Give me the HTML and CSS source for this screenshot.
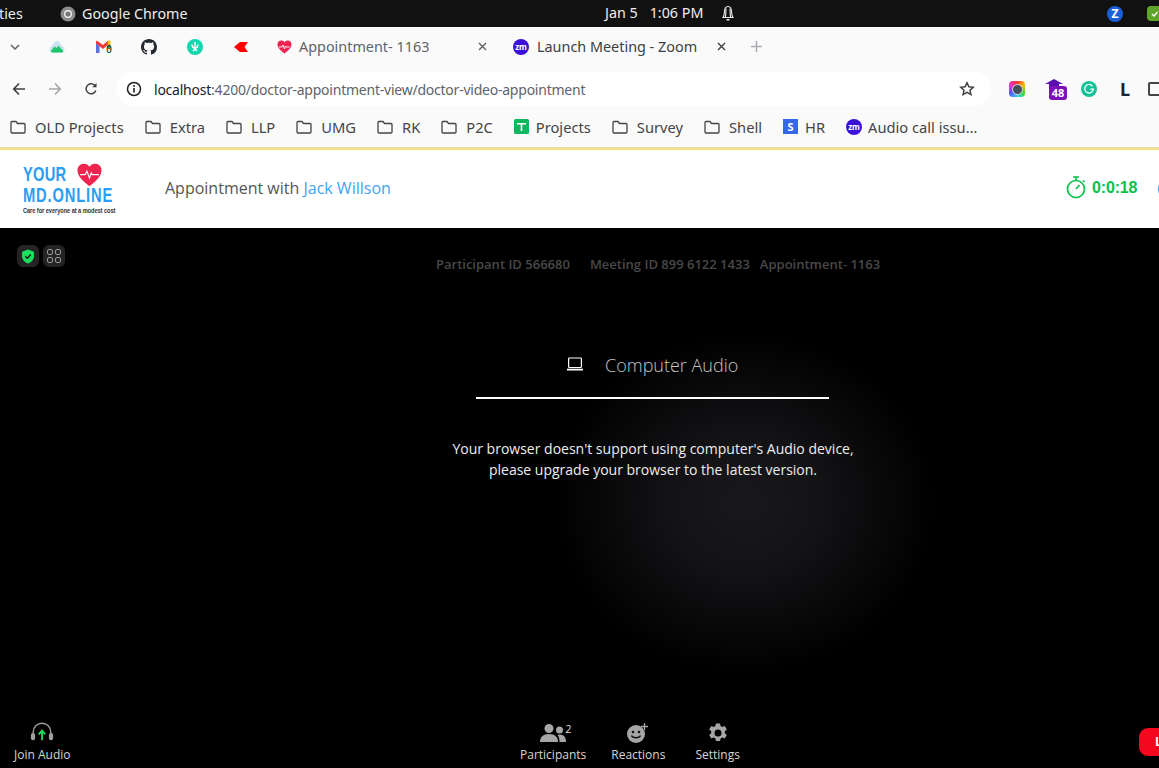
FILE: index.html
```html
<!DOCTYPE html>
<html lang="en">
<head>
<meta charset="utf-8">
<title>Appointment- 1163</title>
<link rel="stylesheet" href="styles.css">
</head>
<body>
<div class="screen">
  <header class="osbar">
    <div class="os-left">
      <span class="os-act">ties</span>
      <svg class="os-chrome" width="16" height="16" viewBox="0 0 16 16"><circle cx="8" cy="8" r="7.5" fill="#8a8a8a"/><circle cx="8" cy="8" r="4" fill="#eee"/><circle cx="8" cy="8" r="2.6" fill="#777"/></svg>
      <span class="os-app">Google Chrome</span>
    </div>
    <div class="os-clock">
      <span class="os-date">Jan 5</span><span>1:06 PM</span>
      <svg class="os-bell" width="14" height="16" viewBox="0 0 14 16" fill="none" stroke="#eee" stroke-width="1.1"><path d="M2 12.5c1.2-1.4 1.3-3 1.4-5.5C3.500 3.500 5 1.500 7 1.500S10.500 3.500 10.600 7c.1 2.500.2 4.100 1.400 5.500z"/><path d="M5 3.500C4.800 6 4.900 9 4.400 12M9 3.500c.2 2.500.1 5.500.6 8.500"/><path d="M5.500 14.800h3" stroke-width="1.500"/></svg>
    </div>
    <div class="os-right">
      <span class="os-z">Z</span>
      <span class="os-shield"><svg width="12" height="12" viewBox="0 0 12 12" fill="none" stroke="#fff" stroke-width="1.300"><path d="M3 6l2 2 3.500-4"/></svg></span>
    </div>
  </header>

  <div class="tabstrip">
    <div class="pin pin-chevron"><svg width="10" height="6" viewBox="0 0 10 6" fill="none" stroke="#5f6368" stroke-width="1.500"><path d="M1 1l4 4 4-4"/></svg></div>
    <div class="pin"><svg width="16" height="14" viewBox="0 0 16 14"><path d="M8 1c2 0 3.200 1.500 4.200 4 2 1.200 3.300 3 3.300 4.800 0 2-1.500 3.200-3.500 3.200H4c-2 0-3.500-1.200-3.500-3.200C.5 8 1.800 6.200 3.800 5 4.800 2.500 6 1 8 1z" fill="#c8e4f0"/><path d="M1.800 11 5.500 6.500l2 1.500L9.500 5.800l4.700 5.200c-.4 1-1.200 1.500-2.200 1.500H4c-1 0-1.800-.5-2.200-1.500z" fill="#1fc76a"/></svg></div>
    <div class="pin"><svg width="16" height="16" viewBox="0 0 16 16"><path d="M1 3.500V14h3.500V7.500z" fill="#5a6fe0"/><path d="M1 2.500c0-.6 1-1 1.500-.6L8 6l4.500-4 1-.3v3.500L8 10 1 4.500z" fill="#ea3a3a"/><path d="M12.500 2l2-.5c.6 0 1 .4 1 1V5.500L13 7z" fill="#fbbc04"/><path d="M12 7l3.500-1.500V9H12z" fill="#34a853"/><rect x="9.500" y="9" width="6.500" height="7" fill="#fff"/></svg><span class="gmail-count">0</span></div>
    <div class="pin"><svg width="16" height="16" viewBox="0 0 16 16" fill="#24292f"><path d="M8 0C3.580 0 0 3.580 0 8c0 3.540 2.290 6.530 5.470 7.590.4.070.55-.17.55-.38 0-.19-.01-.82-.01-1.490-2.010.37-2.530-.49-2.690-.94-.09-.23-.48-.94-.82-1.130-.28-.15-.68-.52-.01-.53.63-.01 1.080.58 1.230.82.720 1.210 1.870.87 2.330.66.070-.52.280-.87.510-1.070-1.780-.2-3.640-.89-3.640-3.950 0-.87.310-1.590.820-2.150-.08-.2-.36-1.020.08-2.120 0 0 .67-.21 2.200.82.640-.18 1.320-.27 2-.27s1.360.09 2 .27c1.530-1.040 2.200-.82 2.200-.82.440 1.100.16 1.920.08 2.120.51.560.82 1.270.82 2.150 0 3.070-1.870 3.750-3.650 3.950.29.250.54.730.54 1.480 0 1.070-.01 1.930-.01 2.200 0 .21.150.46.550.38A8.013 8.013 0 0 0 16 8c0-4.420-3.580-8-8-8z"/></svg></div>
    <div class="pin"><svg width="16" height="16" viewBox="0 0 16 16"><circle cx="8" cy="8" r="8" fill="#12d6ae"/><path d="M8 3v6M5 5.500c0 2 1 3.500 3 3.500s3-1.500 3-3.500M6 12l2-2 2 2" fill="none" stroke="#fff" stroke-width="1.400"/></svg></div>
    <div class="pin"><svg width="14" height="10" viewBox="0 0 14 10"><path d="M0 5 6 0h8l-3.500 5L14 10H6z" fill="#f00"/></svg></div>
    <div class="tab tab-one">
      <svg class="heart-fav" width="15" height="14" viewBox="0 0 30 28"><path d="M15 27C6 20 1 15 1 8.500 1 4 4.500 1 8.500 1c2.800 0 5 1.300 6.500 3.500C16.500 2.300 18.700 1 21.500 1 25.500 1 29 4 29 8.500 29 15 24 20 15 27z" fill="#f0244f"/><path d="M4 14h6l2-4 3 8 2-6 1 2h7" fill="none" stroke="#fff" stroke-width="1.800"/></svg>
      <span class="tab-title muted">Appointment- 1163</span>
      <svg class="tab-x" width="9" height="9" viewBox="0 0 9 9" stroke="#5f6368" stroke-width="1.400"><path d="M1 1l7 7M8 1l-7 7"/></svg>
    </div>
    <div class="tab tab-two">
      <span class="zm-badge">zm</span>
      <span class="tab-title">Launch Meeting - Zoom</span>
      <svg class="tab-x" width="9" height="9" viewBox="0 0 9 9" stroke="#3c4043" stroke-width="1.400"><path d="M1 1l7 7M8 1l-7 7"/></svg>
    </div>
    <svg class="tab-plus" width="11" height="11" viewBox="0 0 11 11" stroke="#a8abb0" stroke-width="1.500"><path d="M5.500 0v11M0 5.500h11"/></svg>
  </div>

  <div class="toolbar">
    <div class="nav-icons">
      <svg width="14" height="14" viewBox="0 0 14 14" fill="none" stroke="#3c4043" stroke-width="1.600"><path d="M13 7H2M7 1.500 1.700 7 7 12.500"/></svg>
      <svg width="14" height="14" viewBox="0 0 14 14" fill="none" stroke="#a4a7ab" stroke-width="1.600"><path d="M1 7h11M7 1.500 12.300 7 7 12.500"/></svg>
      <svg width="14" height="14" viewBox="0 0 14 14" fill="none" stroke="#3c4043" stroke-width="1.500"><path d="M11.800 8.500A5 5 0 1 1 10.600 3.200L12 4.600"/><path d="M12.500 1v4.200H8.300" fill="#3c4043" stroke="none"/></svg>
    </div>
    <div class="omnibox">
      <svg class="info-icon" width="16" height="16" viewBox="0 0 16 16"><circle cx="8" cy="8" r="6.500" fill="none" stroke="#202124" stroke-width="1.500"/><path d="M8 7v4.500" stroke="#202124" stroke-width="1.600"/><circle cx="8" cy="5" r="1" fill="#202124"/></svg>
      <span class="url"><span class="url-host">localhost</span>:4200/doctor-appointment-view/doctor-video-appointment</span>
      <svg class="star" width="16" height="16" viewBox="0 0 16 16" fill="none" stroke="#3c4043" stroke-width="1.500"><path d="M8 1.800l1.900 4 4.300.5-3.200 3 .9 4.300L8 11.400l-3.900 2.200.9-4.300-3.200-3 4.300-.5z"/></svg>
    </div>
    <div class="extensions">
      <span class="ext-lens"><span class="ext-lens-in"></span></span>
      <span class="ext-cap">
        <svg width="18" height="12" viewBox="0 0 18 12"><path d="M9 0l9 5H0z" fill="#5b0fb0"/><rect x="4" y="5" width="10" height="7" fill="#5b0fb0"/></svg>
        <span class="ext-count">48</span>
      </span>
      <svg class="ext-g" width="16" height="16" viewBox="0 0 16 16"><circle cx="8" cy="8" r="8" fill="#15c39a"/><path d="M11.500 5.200A4.300 4.300 0 1 0 12.300 8.200H9.300" fill="none" stroke="#fff" stroke-width="1.300"/></svg>
      <span class="ext-l">L</span>
      <span class="ext-puzzle"></span>
    </div>
  </div>

  <nav class="bookmarks">
    <a class="bm"><svg class="folder" viewBox="0 0 16 14" fill="none" stroke="#444" stroke-width="1.300"><path d="M1 2.500c0-.6.4-1 1-1h4l1.500 2H14c.6 0 1 .4 1 1V12c0 .6-.4 1-1 1H2c-.6 0-1-.4-1-1z"/></svg>OLD Projects</a>
    <a class="bm"><svg class="folder" viewBox="0 0 16 14" fill="none" stroke="#444" stroke-width="1.300"><path d="M1 2.500c0-.6.4-1 1-1h4l1.500 2H14c.6 0 1 .4 1 1V12c0 .6-.4 1-1 1H2c-.6 0-1-.4-1-1z"/></svg>Extra</a>
    <a class="bm"><svg class="folder" viewBox="0 0 16 14" fill="none" stroke="#444" stroke-width="1.300"><path d="M1 2.500c0-.6.4-1 1-1h4l1.500 2H14c.6 0 1 .4 1 1V12c0 .6-.4 1-1 1H2c-.6 0-1-.4-1-1z"/></svg>LLP</a>
    <a class="bm"><svg class="folder" viewBox="0 0 16 14" fill="none" stroke="#444" stroke-width="1.300"><path d="M1 2.500c0-.6.4-1 1-1h4l1.500 2H14c.6 0 1 .4 1 1V12c0 .6-.4 1-1 1H2c-.6 0-1-.4-1-1z"/></svg>UMG</a>
    <a class="bm"><svg class="folder" viewBox="0 0 16 14" fill="none" stroke="#444" stroke-width="1.300"><path d="M1 2.500c0-.6.4-1 1-1h4l1.500 2H14c.6 0 1 .4 1 1V12c0 .6-.4 1-1 1H2c-.6 0-1-.4-1-1z"/></svg>RK</a>
    <a class="bm"><svg class="folder" viewBox="0 0 16 14" fill="none" stroke="#444" stroke-width="1.300"><path d="M1 2.500c0-.6.4-1 1-1h4l1.500 2H14c.6 0 1 .4 1 1V12c0 .6-.4 1-1 1H2c-.6 0-1-.4-1-1z"/></svg>P2C</a>
    <a class="bm bm-tight"><svg class="bm-square" viewBox="0 0 15 15"><rect width="15" height="15" rx="1.500" fill="#0fb760"/><path d="M3 4h9v1.600H8.300V12H6.700V5.600H3z" fill="#fff"/></svg>Projects</a>
    <a class="bm"><svg class="folder" viewBox="0 0 16 14" fill="none" stroke="#444" stroke-width="1.300"><path d="M1 2.500c0-.6.4-1 1-1h4l1.500 2H14c.6 0 1 .4 1 1V12c0 .6-.4 1-1 1H2c-.6 0-1-.4-1-1z"/></svg>Survey</a>
    <a class="bm"><svg class="folder" viewBox="0 0 16 14" fill="none" stroke="#444" stroke-width="1.300"><path d="M1 2.500c0-.6.4-1 1-1h4l1.500 2H14c.6 0 1 .4 1 1V12c0 .6-.4 1-1 1H2c-.6 0-1-.4-1-1z"/></svg>Shell</a>
    <a class="bm bm-tight"><span class="s-badge">S</span>HR</a>
    <a class="bm bm-tight"><span class="zm-badge">zm</span>Audio call issu…</a>
  </nav>

  <div class="app-header">
    <div class="logo">
      <div class="logo-top">
        <span class="logo-word logo-your">YOUR</span>
        <svg class="logo-heart" width="27" height="24" viewBox="0 0 30 28"><path d="M15 27C6 20 1 15 1 8.500 1 4 4.500 1 8.500 1c2.800 0 5 1.300 6.500 3.500C16.500 2.300 18.700 1 21.500 1 25.500 1 29 4 29 8.500 29 15 24 20 15 27z" fill="#f0244f"/><path d="M4 13.500h6l2-4 3 8 2-6 1 2h8" fill="none" stroke="#fff" stroke-width="1.300"/></svg>
      </div>
      <div class="logo-word logo-md">MD.ONLINE</div>
      <div class="logo-tag">Care for everyone at a modest cost</div>
    </div>
    <div class="appt">Appointment with <span class="appt-name">Jack Willson</span></div>
    <div class="timer">
      <svg width="20" height="23" viewBox="0 0 20 23" fill="none" stroke="#0ac24a" stroke-width="1.700"><circle cx="10" cy="13" r="8.500"/><path d="M7 1h6M10 1v3.500M10 13l3.500-4M17 4.500l1.500 1.500"/></svg>
      <span class="timer-val">0:0:18</span>
    </div>
    <span class="edge-blue"></span>
  </div>

  <main class="stage">
    <div class="corner-badges">
      <span class="cbadge"><svg width="14" height="15" viewBox="0 0 14 15"><path d="M7 .5l6 2.200V7c0 3.500-2.500 6-6 7.500C3.500 13 1 10.500 1 7V2.700z" fill="#16e05c"/><path d="M4.300 7.300l2 2 3.500-3.800" fill="none" stroke="#111" stroke-width="1.300"/></svg></span>
      <span class="cbadge"><svg width="14" height="14" viewBox="0 0 14 14" fill="none" stroke="#9a9a9a" stroke-width="1"><rect x=".5" y=".5" width="5" height="5" rx="1.500"/><rect x="8.500" y=".5" width="5" height="5" rx="1.500"/><rect x=".5" y="8.500" width="5" height="5" rx="1.500"/><rect x="8.500" y="8.500" width="5" height="5" rx="1.500"/></svg></span>
    </div>
    <div class="meeting-info">
      <span class="info-a">Participant ID 566680</span>
      <span class="info-b">Meeting ID 899 6122 1433</span>
      <span>Appointment- 1163</span>
    </div>
    <div class="audio-panel">
      <div class="audio-tab">
        <svg width="18" height="14" viewBox="0 0 18 14" fill="none" stroke="#fff" stroke-width="1.200"><rect x="2.600" y="1" width="12.800" height="9.500" rx=".8"/><path d="M1 12.600h16" stroke-width="1.800"/></svg>
        <span>Computer Audio</span>
      </div>
      <p class="audio-msg">Your browser doesn't support using computer's Audio device,<br>please upgrade your browser to the latest version.</p>
    </div>
    <footer class="controls">
      <div class="ctl ctl-join">
        <svg class="join-icon" width="24" height="20" viewBox="0 0 26 20" fill="none"><path d="M3.500 12V10a9.500 9.500 0 0 1 19 0v2" stroke="#a0a0a0" stroke-width="1.500"/><rect x="1" y="11" width="4.500" height="8" rx="2.200" fill="#a0a0a0"/><rect x="20.500" y="11" width="4.500" height="8" rx="2.200" fill="#a0a0a0"/><path d="M13 19V9M9.500 12.500 13 8.500l3.500 4" stroke="#16e05c" stroke-width="2"/></svg>
        <span>Join Audio</span>
      </div>
      <div class="ctl-center">
        <div class="ctl ctl-part">
          <span class="ctl-icon">
            <svg width="26" height="20" viewBox="0 0 26 20" fill="#a6a6a6"><circle cx="9" cy="5.500" r="4.500"/><path d="M0 19c0-5 3-8 9-8s9 3 9 8z"/><circle cx="19.500" cy="7" r="3.500"/><path d="M19.500 19H26c0-4.500-2-7.500-6-7.500-1 0-1.800.2-2.500.5 1.500 1.500 2 4 2 7z"/></svg>
            <span class="part-count">2</span>
          </span>
          <span>Participants</span>
        </div>
        <div class="ctl ctl-react">
          <span class="ctl-icon">
            <svg width="22" height="20" viewBox="0 0 22 20"><circle cx="9" cy="11" r="9" fill="#a6a6a6"/><circle cx="6" cy="9" r="1.300" fill="#111"/><circle cx="12" cy="9" r="1.300" fill="#111"/><path d="M4.500 12.500c1 3 8 3 9 0" fill="none" stroke="#111" stroke-width="1.300"/><path d="M17.500 0v7M14 3.500h7" stroke="#a6a6a6" stroke-width="1.300"/></svg>
          </span>
          <span>Reactions</span>
        </div>
        <div class="ctl ctl-set">
          <span class="ctl-icon">
            <svg width="20" height="20" viewBox="0 0 20 20"><path fill="#a6a6a6" fill-rule="evenodd" d="M8 .5h4l.6 2.600 1.700.9 2.500-.9 2 3.500-2 1.700v1.900l2 1.700-2 3.500-2.500-.9-1.700.9-.6 2.600H8l-.6-2.600-1.700-.9-2.500.9-2-3.500 2-1.700V8.300l-2-1.700 2-3.500 2.500.9 1.700-.9zM10 6.500a3.500 3.500 0 1 0 0 7 3.500 3.500 0 0 0 0-7z"/></svg>
          </span>
          <span>Settings</span>
        </div>
      </div>
      <div class="leave"><span>L</span></div>
    </footer>
  </main>
</div>
</body>
</html>
```
FILE: styles.css
```css
* { box-sizing: border-box; }
html, body { margin: 0; padding: 0; background: #000; }
body { width: 1159px; height: 768px; overflow: hidden; font-family: "Noto Sans", sans-serif; }
svg { display: block; flex: none; }
.screen { width: 1159px; height: 768px; display: flex; flex-direction: column; overflow: hidden; }

.osbar { height: 27px; background: #111; color: #eee; font-size: 14.300px; display: flex; align-items: center; position: relative; flex: none; }
.os-left { display: flex; align-items: center; margin-left: -1px; }
.os-act { width: 61px; }
.os-chrome { margin-right: 6px; }
.os-clock { display: flex; align-items: center; position: absolute; left: 605px; top: 3px; font-size: 14.300px; }
.os-date { margin-right: 12px; }
.os-bell { margin-left: 18px; }
.os-right { margin-left: auto; display: flex; align-items: center; gap: 24px; margin-right: -3px; }
.os-z { width: 16px; height: 16px; border-radius: 50%; background: #1a5fd8; color: #fff; font-size: 12px; font-weight: 700; display: flex; align-items: center; justify-content: center; }
.os-shield { width: 15px; height: 15px; border-radius: 4px; background: #5fa52a; display: flex; align-items: center; justify-content: center; }

.tabstrip { height: 43px; padding-bottom: 4px; background: #fafafa; display: flex; align-items: center; flex: none; color: #3c4043; font-size: 14.400px; }
.pin { width: 46px; height: 20px; display: flex; align-items: center; justify-content: center; position: relative; }
.pin-chevron { width: 34px; padding-right: 4px; }
.gmail-count { position: absolute; left: 26px; top: 7px; font-size: 10px; line-height: 12px; color: #111; font-family: "DejaVu Sans Mono", monospace; }
.tab { display: flex; align-items: center; height: 100%; position: relative; }
.tab-one { width: 239px; padding-left: 13px; }
.tab-two { width: 230px; padding-left: 10px; }
.heart-fav { margin-right: 7px; }
.muted { color: #5f6368; }
.tab-x { margin-left: auto; margin-right: 16px; }
.tab-two .tab-x { margin-right: 0; margin-left: 20px; }
.tab-plus { margin-left: 18px; }
.zm-badge { width: 16px; height: 16px; border-radius: 50%; background: #3b10d8; color: #fff; font-size: 8px; font-weight: 700; display: flex; align-items: center; justify-content: center; margin-right: 8px; flex: none; line-height: 1; }

.toolbar { height: 40px; padding-bottom: 2px; background: #fafafa; display: flex; align-items: center; flex: none; }
.nav-icons { display: flex; align-items: center; gap: 22px; padding-left: 12px; width: 116px; flex: none; }
.omnibox { width: 875px; height: 34px; background: #fff; border-radius: 17px; display: flex; align-items: center; padding-left: 10px; padding-right: 16px; flex: none; }
.info-icon { margin-right: 12px; }
.url { font-size: 14px; color: #5f6368; letter-spacing: -.23px; white-space: nowrap; }
.url-host { color: #202124; }
.star { margin-left: auto; }
.extensions { display: flex; align-items: center; margin-left: 18px; flex: none; }
.ext-lens { width: 16px; height: 16px; border-radius: 4px; background: conic-gradient(#f33, #fb0, #3d3, #3cf, #55f, #e3c, #f33); display: flex; align-items: center; justify-content: center; flex: none; }
.ext-lens-in { width: 11px; height: 11px; border-radius: 50%; background: #44505c; border: 1.500px solid #ddd; }
.ext-cap { width: 18px; height: 22px; margin-left: 20px; position: relative; flex: none; padding-top: 1px; }
.ext-count { position: absolute; left: 4px; top: 8px; width: 18px; height: 14px; border-radius: 3px; background: #7d10b8; color: #fff; font-size: 11px; font-weight: 700; line-height: 14px; text-align: center; }
.ext-g { margin-left: 18px; }
.ext-l { font-size: 18px; font-weight: 700; color: #222; margin-left: 23px; line-height: 1; width: 10px; flex: none; }
.ext-puzzle { width: 14px; height: 14px; border: 2px solid #444; margin-left: 18px; flex: none; border-radius: 2px; }

.bookmarks { height: 38px; padding-bottom: 4px; background: #fafafa; border-bottom: 1px solid #e8dfa8; display: flex; align-items: center; gap: 21px; padding-left: 10px; color: #444; font-size: 14.700px; flex: none; white-space: nowrap; }
.bm { display: flex; align-items: center; gap: 9px; }
.bm-tight { gap: 7px; }
.folder { width: 16px; height: 14px; }
.bm-square { width: 15px; height: 15px; }
.s-badge { width: 15px; height: 15px; background: #3568e8; color: #fff; font-size: 11px; font-weight: 700; display: flex; align-items: center; justify-content: center; }
.bm-tight .zm-badge { margin-right: -1px; }

.app-header { height: 80px; padding-bottom: 2px; background: #fff; border-top: 2px solid #f8e08a; display: flex; align-items: center; position: relative; flex: none; }
.logo { width: 142px; margin-left: 23px; color: #2a9df4; align-self: flex-start; margin-top: 13px; }
.logo-top { display: flex; height: 24px; align-items: flex-end; }
.logo-word { font-family: "Liberation Sans", sans-serif; font-weight: 700; font-size: 21px; line-height: 15px; transform: scaleX(.7); transform-origin: left center; white-space: nowrap; }
.logo-your { width: 53px; margin-bottom: 6px; letter-spacing: .3px; flex: none; }
.logo-md { letter-spacing: 1.200px; }
.logo-tag { font-family: "Liberation Sans", sans-serif; font-size: 7px; line-height: 9px; color: #333; font-weight: 700; margin-top: 3.500px; white-space: nowrap; letter-spacing: -.08px; transform: scaleX(.81); transform-origin: left center; }
.appt { font-family: "Open Sans", sans-serif; font-size: 16px; color: #555; }
.appt-name { color: #3fa5f5; }
.timer { display: flex; align-items: center; gap: 6px; position: absolute; left: 1066px; top: 26px; }
.timer-val { font-family: "Liberation Sans", sans-serif; font-weight: 700; font-size: 16px; letter-spacing: -.15px; color: #0ac24a; }
.edge-blue { position: absolute; left: 1158px; top: 33px; width: 6px; height: 12px; border-radius: 50%; background: #2a9df4; }

.stage { flex: 1; min-height: 0; position: relative; display: flex; flex-direction: column; font-family: "Open Sans", sans-serif; background: radial-gradient(ellipse 190px 170px at 745px 275px, #19191d 0%, #131316 40%, #070708 78%, #000 100%); }
.corner-badges { position: absolute; left: 17px; top: 17px; display: flex; gap: 4px; }
.cbadge { width: 22px; height: 22px; border-radius: 6px; background: #242424; display: flex; align-items: center; justify-content: center; }
.meeting-info { margin-top: 28px; height: 17px; padding-left: 436px; display: flex; font-size: 13px; line-height: 17px; font-weight: 600; color: #484848; white-space: nowrap; }
.info-a { margin-right: 20px; }
.info-b { margin-right: 10px; }
.audio-panel { width: 400px; margin-left: 453px; display: flex; flex-direction: column; align-items: center; color: #fff; }
.audio-tab { width: 353px; height: 53px; margin-top: 73px; padding-top: 5px; margin-left: 23px; align-self: flex-start; border-bottom: 2px solid #fff; display: flex; align-items: flex-start; padding-left: 90px; gap: 21px; color: #c4c4c4; font-size: 18px; font-weight: 300; line-height: 28px; white-space: nowrap; }
.audio-tab svg { margin-top: 6px; }
.audio-msg { margin: 39px 0 0; font-size: 14px; line-height: 21px; text-align: center; color: #eee; white-space: nowrap; }

.controls { margin-top: auto; height: 56px; display: flex; position: relative; color: #d6d6d6; font-size: 12px; line-height: 16px; flex: none; }
.ctl { display: flex; flex-direction: column; align-items: center; justify-content: flex-start; white-space: nowrap; }
.ctl-join { position: absolute; left: 14px; top: 10px; gap: 5px; }
.ctl-center { position: absolute; left: 520px; top: 10px; display: flex; gap: 25px; }
.ctl-set { margin-left: 5px; }
.ctl-icon { height: 22px; display: flex; align-items: center; position: relative; margin-bottom: 3px; }
.part-count { position: absolute; left: 25px; top: 0; font-size: 11px; line-height: 14px; }
.leave { position: absolute; left: 1139px; top: 16px; width: 60px; height: 28px; background: #f5071f; border-radius: 9px; color: #fff; font-weight: 700; font-size: 12px; line-height: 28px; padding-left: 16px; }
```
